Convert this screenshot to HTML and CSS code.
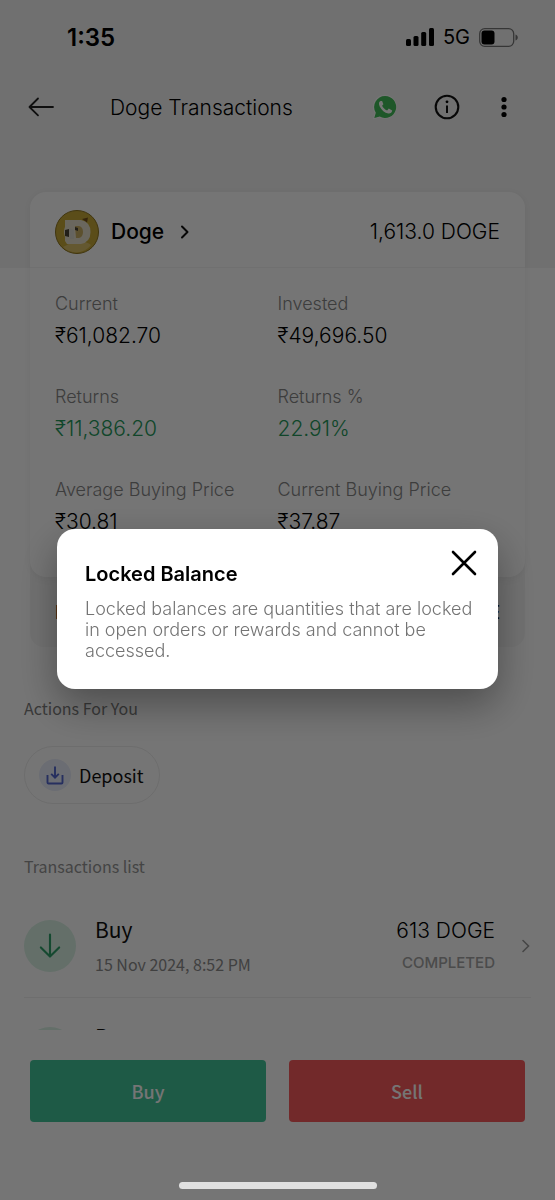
FILE: index.html
```html
<!DOCTYPE html>
<html lang="en">
<head>
<meta charset="utf-8">
<meta name="viewport" content="width=device-width, initial-scale=1">
<title>Doge Transactions</title>
<link rel="stylesheet" href="styles.css">
</head>
<body>
<div class="app">
  <main class="content">
    <header class="top">
      <div class="status">
        <span class="time">1:35</span>
        <span class="signals">
          <svg width="28" height="18" viewBox="0 0 28 18" aria-hidden="true"><rect x="0" y="11" width="5" height="7" rx="1.5"/><rect x="7.5" y="8" width="5" height="10" rx="1.5"/><rect x="15.200" y="4" width="5" height="14" rx="1.500"/><rect x="23" y="0" width="5" height="18" rx="1.500"/></svg>
          <span class="network">5G</span>
          <svg width="39" height="19" viewBox="0 0 39 19" aria-hidden="true"><rect x=".7" y=".7" width="34" height="17.600" rx="5" fill="none" stroke="#777" stroke-width="1.300"/><rect x="2.500" y="2.500" width="13" height="14" rx="3"/><path d="M36.500 6.500c3 1 3 5 0 6z" fill="#777"/></svg>
        </span>
      </div>
      <nav class="bar">
        <button class="icon-btn" aria-label="Back"><svg width="26" height="20" viewBox="0 0 26 20"><path d="M10 1.500 1.500 10l8.500 8.300M1.500 10H25" fill="none" stroke="#222" stroke-width="1.800" stroke-linecap="round" stroke-linejoin="round"/></svg></button>
        <h1 class="title">Doge Transactions</h1>
        <div class="tools">
          <button class="icon-btn" aria-label="WhatsApp"><svg width="26" height="26" viewBox="0 0 26 26"><path d="M13 .8A12 12 0 0 0 2.700 19L.8 25.400l6.700-1.800A12 12 0 1 0 13 .8z" fill="#fff"/><path d="M13.200 2A11 11 0 0 0 3.800 18.700L2.300 24l5.500-1.400A11 11 0 1 0 13.200 2z" fill="#43be59"/><path d="M8.600 7.100c-1.800.8-2.200 3-.9 5.300 1.900 3.700 5 6.300 8.600 7 2 .3 3.700-.9 3.900-3l-3.400-1.800-1.700 1.800c-2.200-.8-4-2.500-5-4.700l1.300-1.500-1.300-3.200z" fill="#fff"/></svg></button>
          <button class="icon-btn" aria-label="Information"><svg width="26" height="26" viewBox="0 0 26 26"><circle cx="13" cy="13" r="11.300" fill="none" stroke="#111" stroke-width="2.100"/><circle cx="13" cy="7.800" r="1.400"/><path d="M13 11.500v7.500" stroke="#111" stroke-width="2"/></svg></button>
          <button class="icon-btn" aria-label="More options"><svg width="16" height="22" viewBox="0 0 16 22"><circle cx="8" cy="3.500" r="2.600"/><circle cx="8" cy="11" r="2.600"/><circle cx="8" cy="18.500" r="2.600"/></svg></button>
        </div>
      </nav>
    </header>

    <section class="holding">
      <div class="card">
        <div class="card-head">
          <svg width="44" height="44" viewBox="0 0 44 44" aria-hidden="true"><circle cx="22" cy="22" r="21.500" fill="#c6a937" stroke="#8d7420"/><path d="M12 35c7-6 20-4 24 0-7 9-20 10-28 2z" fill="#dabf69"/><path d="m27 9 6-1.500-1 5z" fill="#75501b"/><path d="M10 10h16q9.500 2 9.500 12T26 34H12l-2-3v-4q-2-6 0-10z" fill="#e8e0cc"/><path d="M20 16h4q4 1 4 6t-4 6h-3z" fill="#c8ae64"/><path d="M10 20l4-1v8l-4-1zM20 17l3 1v3l-3-1z" fill="#4b4535"/><path d="M14 18l5 2v9h-4z" fill="#ddd9cf"/></svg>
          <a class="coin" href="#doge">Doge <svg width="10" height="14" viewBox="0 0 10 14" aria-hidden="true"><path d="m2 1.500 5.500 5.500L2 12.500" fill="none" stroke="#111" stroke-width="2" stroke-linecap="round" stroke-linejoin="round"/></svg></a>
          <span class="qty">1,613.0 DOGE</span>
        </div>
        <dl class="stats">
          <div class="stat"><dt>Current</dt><dd>₹61,082.70</dd></div>
          <div class="stat"><dt>Invested</dt><dd>₹49,696.50</dd></div>
          <div class="stat"><dt>Returns</dt><dd class="gain">₹11,386.20</dd></div>
          <div class="stat"><dt>Returns %</dt><dd class="gain">22.91%</dd></div>
          <div class="stat"><dt>Average Buying Price</dt><dd>₹30.81</dd></div>
          <div class="stat"><dt>Current Buying Price</dt><dd>₹37.87</dd></div>
        </dl>
      </div>
      <div class="locked"><span>Locked</span><span>0 DOGE</span></div>
    </section>

    <section class="actions">
      <h2 class="section-title strong">Actions For You</h2>
      <button class="deposit">
        <svg width="32" height="32" viewBox="0 0 32 32" aria-hidden="true"><circle cx="16" cy="16" r="16" fill="#e9edfb"/><path d="M8.500 16v7.500q0 1 1 1h13q1 0 1-1V16M16 7.500V18M12.200 14.800l3.800 3.800 3.800-3.800" fill="none" stroke="#5367cf" stroke-width="1.900"/></svg>
        Deposit
      </button>
    </section>

    <section class="history">
      <h2 class="section-title">Transactions list</h2>
      <ul class="list">
        <li class="row">
          <svg class="dir" width="52" height="52" viewBox="0 0 54 54" aria-hidden="true"><circle cx="27" cy="27" r="27" fill="#d9f2e5"/><path d="M27 15v23M17.500 28.500 27 38l9.500-9.500" fill="none" stroke="#2fa06a" stroke-width="2.200" stroke-linecap="round" stroke-linejoin="round"/></svg>
          <div class="what"><span class="kind">Buy</span><span class="date">15 Nov 2024, 8:52 PM</span></div>
          <div class="amount"><span class="sum">613 DOGE</span><span class="state">COMPLETED</span></div>
          <svg class="go" width="10" height="14" viewBox="0 0 10 14" aria-hidden="true"><path d="m2 1.500 5.500 5.500L2 12.500" fill="none" stroke="#999" stroke-width="1.600" stroke-linecap="round"/></svg>
        </li>
        <li class="row">
          <svg class="dir" width="52" height="52" viewBox="0 0 54 54" aria-hidden="true"><circle cx="27" cy="27" r="27" fill="#d9f2e5"/></svg>
          <div class="what"><span class="kind">Buy</span><span class="date"></span></div>
        </li>
      </ul>
    </section>
  </main>

  <footer class="trade">
    <button class="trade-btn buy">Buy</button>
    <button class="trade-btn sell">Sell</button>
  </footer>
</div>

<div class="backdrop">
  <div class="dialog" role="dialog" aria-modal="true" aria-labelledby="dialog-title">
    <div class="dialog-text">
      <h2 class="dialog-title" id="dialog-title">Locked Balance</h2>
      <p class="dialog-body">Locked balances are quantities that are locked in open orders or rewards and cannot be accessed.</p>
    </div>
    <button class="close" aria-label="Close"><svg width="26" height="26" viewBox="0 0 26 26"><path d="m2 2 22 22M24 2 2 24" stroke="#000" stroke-width="2.600" stroke-linecap="round"/></svg></button>
  </div>
  <div class="home-indicator"></div>
</div>
</body>
</html>
```
FILE: styles.css
```css
* { box-sizing: border-box; }
body { margin: 0; background: #fff; color: #111; font-family: Inter, "Liberation Sans", sans-serif; }
h1, h2, p, dl, dd, ul { margin: 0; padding: 0; font-weight: 400; }
button { border: 0; padding: 0; background: none; color: inherit; font: inherit; }
svg { display: block; flex: none; }

.app { display: flex; flex-direction: column; height: 100vh; }
.content { flex: 1; min-height: 0; overflow: hidden; }

.top { height: 268px; background: #f4f4f4; }
.status { display: flex; align-items: center; justify-content: space-between; height: 74px; padding: 0 37px 0 67px; color: #000; }
.time { font-size: 24px; font-weight: 600; }
.signals { display: flex; align-items: center; gap: 9px; }
.network { font-size: 20px; }
.bar { display: flex; align-items: center; height: 66px; padding: 0 43px 0 28px; }
.title { margin-left: 56px; color: #000; font-size: 21px; font-weight: 300; }
.tools { display: flex; align-items: center; gap: 36px; margin-left: auto; }
.icon-btn { display: flex; align-items: center; }

.holding { margin: -76px 30px 0; }
.card { position: relative; border-radius: 16px; background: #fff; box-shadow: 0 1px 10px rgba(0, 0, 0, .06); }
.card-head { display: flex; align-items: center; height: 76px; padding: 4px 25px 0; border-bottom: 1px solid #f4f4f4; }
.coin { display: flex; align-items: center; gap: 16px; margin-left: 12px; color: #000; font-size: 21px; font-weight: 500; text-decoration: none; }
.qty { margin-left: auto; color: #000; font-size: 21px; font-weight: 300; }
.stats { display: grid; grid-template-columns: 1fr 1fr; row-gap: 34px; padding: 24px 25px 40px; font-weight: 300; }
.stat dt { color: #858585; font-size: 18px; line-height: 24px; }
.stat dd { margin-top: 5px; color: #000; font-size: 21px; line-height: 30px; font-weight: 300; }
.stat .gain { color: #259a5c; }
.locked { display: flex; justify-content: space-between; align-items: flex-end; height: 86px; margin-top: -16px; padding: 0 25px 24px; border-radius: 0 0 14px 14px; background: #f7f7f7; font-size: 18px; font-weight: 500; }

.actions { padding: 47px 24px 0; }
.section-title { color: #959595; font: 400 16px/28px "Noto Sans CJK SC", sans-serif; }
.strong { color: #7c7c7c; }
.deposit { display: flex; align-items: center; gap: 8px; height: 58px; margin-top: 24px; padding: 0 15px 0 14px; border: 1px solid #ededed; border-radius: 29px; font: 400 18px/28px "Noto Sans CJK SC", sans-serif; }

.history { padding: 48px 24px 0; }
.list { list-style: none; }
.row { display: flex; align-items: center; height: 107px; padding: 15px 0 12px; border-bottom: 1px solid #f0f0f0; }
.row:first-child { height: 118px; padding-top: 26px; }
.what, .amount { display: flex; flex-direction: column; gap: 8px; }
.what { margin-left: 19px; font-family: "Noto Sans CJK SC", sans-serif; }
.kind { font-size: 21px; line-height: 28px; }
.date { min-height: 26px; color: #8c8c8c; font-size: 16px; line-height: 26px; }
.amount { margin-left: auto; text-align: right; }
.sum { color: #000; font-size: 21px; line-height: 26px; font-weight: 300; }
.state { color: #a3a3a3; font-size: 15px; line-height: 22px; font-weight: 500; }
.go { margin-left: 26px; }

.trade { display: flex; gap: 23px; padding: 30px 30px 78px; }
.trade-btn { flex: 1; height: 62px; border-radius: 4px; color: #fff; font: 500 18px/28px "Noto Sans CJK SC", sans-serif; }
.buy { background: #43c49a; }
.sell { background: #f85b5d; }

.backdrop { position: fixed; inset: 0; display: flex; align-items: center; justify-content: center; padding: 18px 57px 0; background: rgba(0, 0, 0, .54); }
.dialog { position: relative; flex: 1; padding: 33px 20px 28px 28px; border-radius: 18px; background: #fff; box-shadow: 0 16px 40px rgba(0, 0, 0, .35); }
.dialog-title { color: #000; font-size: 20px; line-height: 24px; font-weight: 600; }
.dialog-body { margin-top: 12px; color: #747474; font-size: 18px; line-height: 21px; font-weight: 300; }
.close { position: absolute; top: 21px; right: 21px; }
.home-indicator { position: absolute; bottom: 11px; left: 50%; width: 198px; height: 7px; margin-left: -99px; border-radius: 4px; background: #e0e0e0; }
```
